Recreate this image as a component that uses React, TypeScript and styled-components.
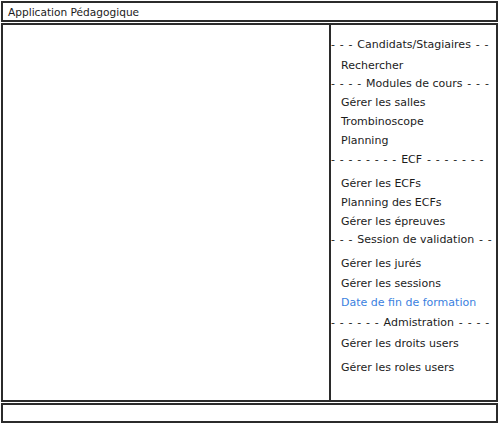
import React from 'react'
import styled, { createGlobalStyle } from 'styled-components'

const GlobalStyle = createGlobalStyle`
  html, body {
    margin: 0;
    padding: 0;
    background: #ffffff;
  }
  body {
    font-family: "DejaVu Sans", "Liberation Sans", sans-serif;
    color: #1c1c1c;
  }
`

const Screen = styled.div`
  width: 500px;
  height: 425px;
  box-sizing: border-box;
  padding: 1px 2px 2px 1px;
  display: flex;
  flex-direction: column;
  gap: 1px;
`

const TitleBar = styled.div`
  height: 21px;
  box-sizing: border-box;
  border: 2px solid #2b2b2b;
  display: flex;
  align-items: center;
  padding-left: 5px;
  font-size: 10.6px;
`

const Body = styled.div`
  flex: 1;
  box-sizing: border-box;
  border: 2px solid #2b2b2b;
  display: flex;
  min-height: 0;
`

const Canvas = styled.div`
  flex: 1;
`

const Menu = styled.nav`
  width: 167px;
  box-sizing: border-box;
  border-left: 2px solid #2b2b2b;
  padding-top: 10px;
  display: flex;
  flex-direction: column;
  overflow: hidden;
`

const Section = styled.div<{ $mt: number }>`
  height: 18px;
  margin-top: ${p => p.$mt}px;
  display: flex;
  align-items: center;
  white-space: pre;
  font-size: 11px;
`

const Dashes = styled.span`
  word-spacing: 1.3px;
`

const Item = styled.a<{ $mt: number; $active?: boolean }>`
  height: 18px;
  margin-top: ${p => p.$mt}px;
  display: flex;
  align-items: center;
  padding-left: 10px;
  font-size: 11px;
  white-space: nowrap;
  text-decoration: none;
  color: ${p => (p.$active ? '#3b7fe0' : '#1c1c1c')};
`

const StatusBar = styled.div`
  height: 20px;
  box-sizing: border-box;
  border: 2px solid #2b2b2b;
`

type Entry = {
  label: string
  mt: number
  dashes?: [number, number]
  active?: boolean
}

const entries: Entry[] = [
  { label: 'Candidats/Stagiaires', dashes: [3, 2], mt: 0 },
  { label: 'Rechercher', mt: 3 },
  { label: 'Modules de cours', dashes: [4, 3], mt: 0 },
  { label: 'Gérer les salles', mt: 1 },
  { label: 'Trombinoscope', mt: 1 },
  { label: 'Planning', mt: 1 },
  { label: 'ECF', dashes: [8, 7], mt: 1 },
  { label: 'Gérer les ECFs', mt: 6 },
  { label: 'Planning des ECFs', mt: 1 },
  { label: 'Gérer les épreuves', mt: 1 },
  { label: 'Session de validation', dashes: [3, 2], mt: 0 },
  { label: 'Gérer les jurés', mt: 6 },
  { label: 'Gérer les sessions', mt: 2 },
  { label: 'Date de fin de formation', mt: 1, active: true },
  { label: 'Admistration', dashes: [6, 4], mt: 2 },
  { label: 'Gérer les droits users', mt: 3 },
  { label: 'Gérer les roles users', mt: 6 },
]

const dashRun = (n: number) => Array(n).fill('-').join(' ')

export default function App() {
  return (
    <>
      <GlobalStyle />
      <Screen>
        <TitleBar>Application Pédagogique</TitleBar>
        <Body>
          <Canvas />
          <Menu>
            {entries.map(e =>
              e.dashes ? (
                <Section key={e.label} $mt={e.mt}>
                  <Dashes>{dashRun(e.dashes[0]) + ' '}</Dashes>
                  {e.label}
                  <Dashes>{' ' + dashRun(e.dashes[1])}</Dashes>
                </Section>
              ) : (
                <Item key={e.label} href="#" $mt={e.mt} $active={e.active}>
                  {e.label}
                </Item>
              )
            )}
          </Menu>
        </Body>
        <StatusBar />
      </Screen>
    </>
  )
}
